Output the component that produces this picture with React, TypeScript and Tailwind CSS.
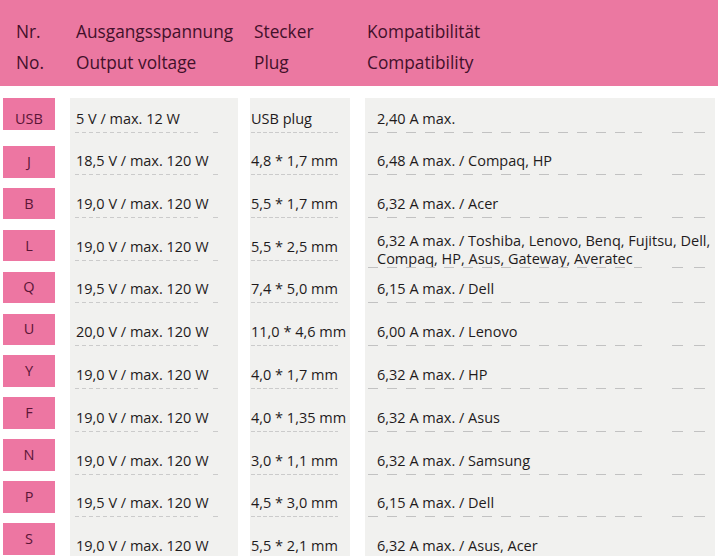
import React from "react";

type Row = { id: string; v: string; p: string; c: string[] };

const rows: Row[] = [
  { id: "USB", v: "5 V / max. 12 W", p: "USB plug", c: ["2,40 A max."] },
  { id: "J", v: "18,5 V / max. 120 W", p: "4,8 * 1,7 mm", c: ["6,48 A max. / Compaq, HP"] },
  { id: "B", v: "19,0 V / max. 120 W", p: "5,5 * 1,7 mm", c: ["6,32 A max. / Acer"] },
  {
    id: "L",
    v: "19,0 V / max. 120 W",
    p: "5,5 * 2,5 mm",
    c: ["6,32 A max. / Toshiba, Lenovo, Benq, Fujitsu, Dell,", "Compaq, HP, Asus, Gateway, Averatec"],
  },
  { id: "Q", v: "19,5 V / max. 120 W", p: "7,4 * 5,0 mm", c: ["6,15 A max. / Dell"] },
  { id: "U", v: "20,0 V / max. 120 W", p: "11,0 * 4,6 mm", c: ["6,00 A max. / Lenovo"] },
  { id: "Y", v: "19,0 V / max. 120 W", p: "4,0 * 1,7 mm", c: ["6,32 A max. / HP"] },
  { id: "F", v: "19,0 V / max. 120 W", p: "4,0 * 1,35 mm", c: ["6,32 A max. / Asus"] },
  { id: "N", v: "19,0 V / max. 120 W", p: "3,0 * 1,1 mm", c: ["6,32 A max. / Samsung"] },
  { id: "P", v: "19,5 V / max. 120 W", p: "4,5 * 3,0 mm", c: ["6,15 A max. / Dell"] },
  { id: "S", v: "19,0 V / max. 120 W", p: "5,5 * 2,1 mm", c: ["6,32 A max. / Asus, Acer"] },
];

function VDash() {
  return (
    <div className="mt-[3px] ml-[5px] flex h-px items-center">
      <div className="h-px w-[126px] bg-[repeating-linear-gradient(90deg,#cbcbcb_0_4px,transparent_4px_7px)]" />
      <div className="ml-[12px] h-px w-[5px] bg-[#cbcbcb]" />
    </div>
  );
}

function PDash() {
  return (
    <div className="mt-[3px] ml-[1px] h-px w-[87px] bg-[repeating-linear-gradient(90deg,#cbcbcb_0_4px,transparent_4px_6px)]" />
  );
}

function CDash({ tight }: { tight?: boolean }) {
  return (
    <div className={tight ? "-mt-[2px] ml-[3px] flex h-px items-center" : "mt-[3px] ml-[3px] flex h-px items-center"}>
      <div className="h-px w-[274px] bg-[repeating-linear-gradient(90deg,#c2c2c2_0_10px,transparent_10px_19px)]" />
      <div className="ml-[30px] h-px w-[34px] bg-[repeating-linear-gradient(90deg,#c2c2c2_0_11px,transparent_11px_22px)]" />
    </div>
  );
}

export default function App() {
  return (
    <div className="h-[556px] w-[720px] overflow-hidden bg-white font-['Open_Sans',sans-serif]">
      {/* header */}
      <div className="grid h-[86px] w-[718px] grid-cols-[60px_178px_113px_1fr] bg-[#eb78a1] pl-[16px] pt-[15.5px] text-[17.3px] leading-[31px] text-[#42102a]">
        <div>
          <div>Nr.</div>
          <div>No.</div>
        </div>
        <div>
          <div>Ausgangsspannung</div>
          <div>Output voltage</div>
        </div>
        <div>
          <div>Stecker</div>
          <div>Plug</div>
        </div>
        <div>
          <div>Kompatibilität</div>
          <div>Compatibility</div>
        </div>
      </div>

      {/* body */}
      <div className="mt-[12px] flex h-[458px] text-[14.5px] leading-[20px] text-[#1f1b1c]">
        {/* badges */}
        <div className="ml-[3px] w-[52px]">
          {rows.map((r, i) =>
            i === 0 ? (
              <div key={r.id} className="h-[48px]">
                <div className="h-[32px] bg-[#ed76a2] pt-[11px] text-center text-[#5b1537]">{r.id}</div>
              </div>
            ) : (
              <div key={r.id} className="h-[41.9px]">
                <div className="flex h-[31.5px] items-center justify-center bg-[#ed76a2] text-[#5b1537]">{r.id}</div>
              </div>
            )
          )}
        </div>

        {/* voltage */}
        <div className="ml-[15px] w-[168px] bg-[#f1f1ef]">
          {rows.map((r, i) => (
            <div key={r.id} className={i === 0 ? "h-[48px] pt-[11px]" : "h-[42.8px] pt-[5px]"}>
              <div className="pl-[6px] whitespace-nowrap">{r.v}</div>
              <VDash />
            </div>
          ))}
        </div>

        {/* plug */}
        <div className="ml-[12px] w-[100px] bg-[#f1f1ef]">
          {rows.map((r, i) => (
            <div key={r.id} className={i === 0 ? "h-[48px] pt-[11px]" : "h-[42.8px] pt-[5px]"}>
              <div className="pl-[1px] whitespace-nowrap">{r.p}</div>
              <PDash />
            </div>
          ))}
        </div>

        {/* compatibility */}
        <div className="ml-[15px] w-[350px] bg-[#f1f1ef]">
          {rows.map((r, i) => {
            const multi = r.c.length > 1;
            return (
              <div
                key={r.id}
                className={i === 0 ? "h-[48px] pt-[11px]" : multi ? "h-[42.8px] pt-0" : "h-[42.8px] pt-[5px]"}
              >
                <div className={multi ? "pl-[12px] whitespace-nowrap leading-[18.5px]" : "pl-[12px] whitespace-nowrap"}>
                  {r.c.map((line) => (
                    <div key={line}>{line}</div>
                  ))}
                </div>
                <CDash tight={multi} />
              </div>
            );
          })}
        </div>
      </div>
    </div>
  );
}
